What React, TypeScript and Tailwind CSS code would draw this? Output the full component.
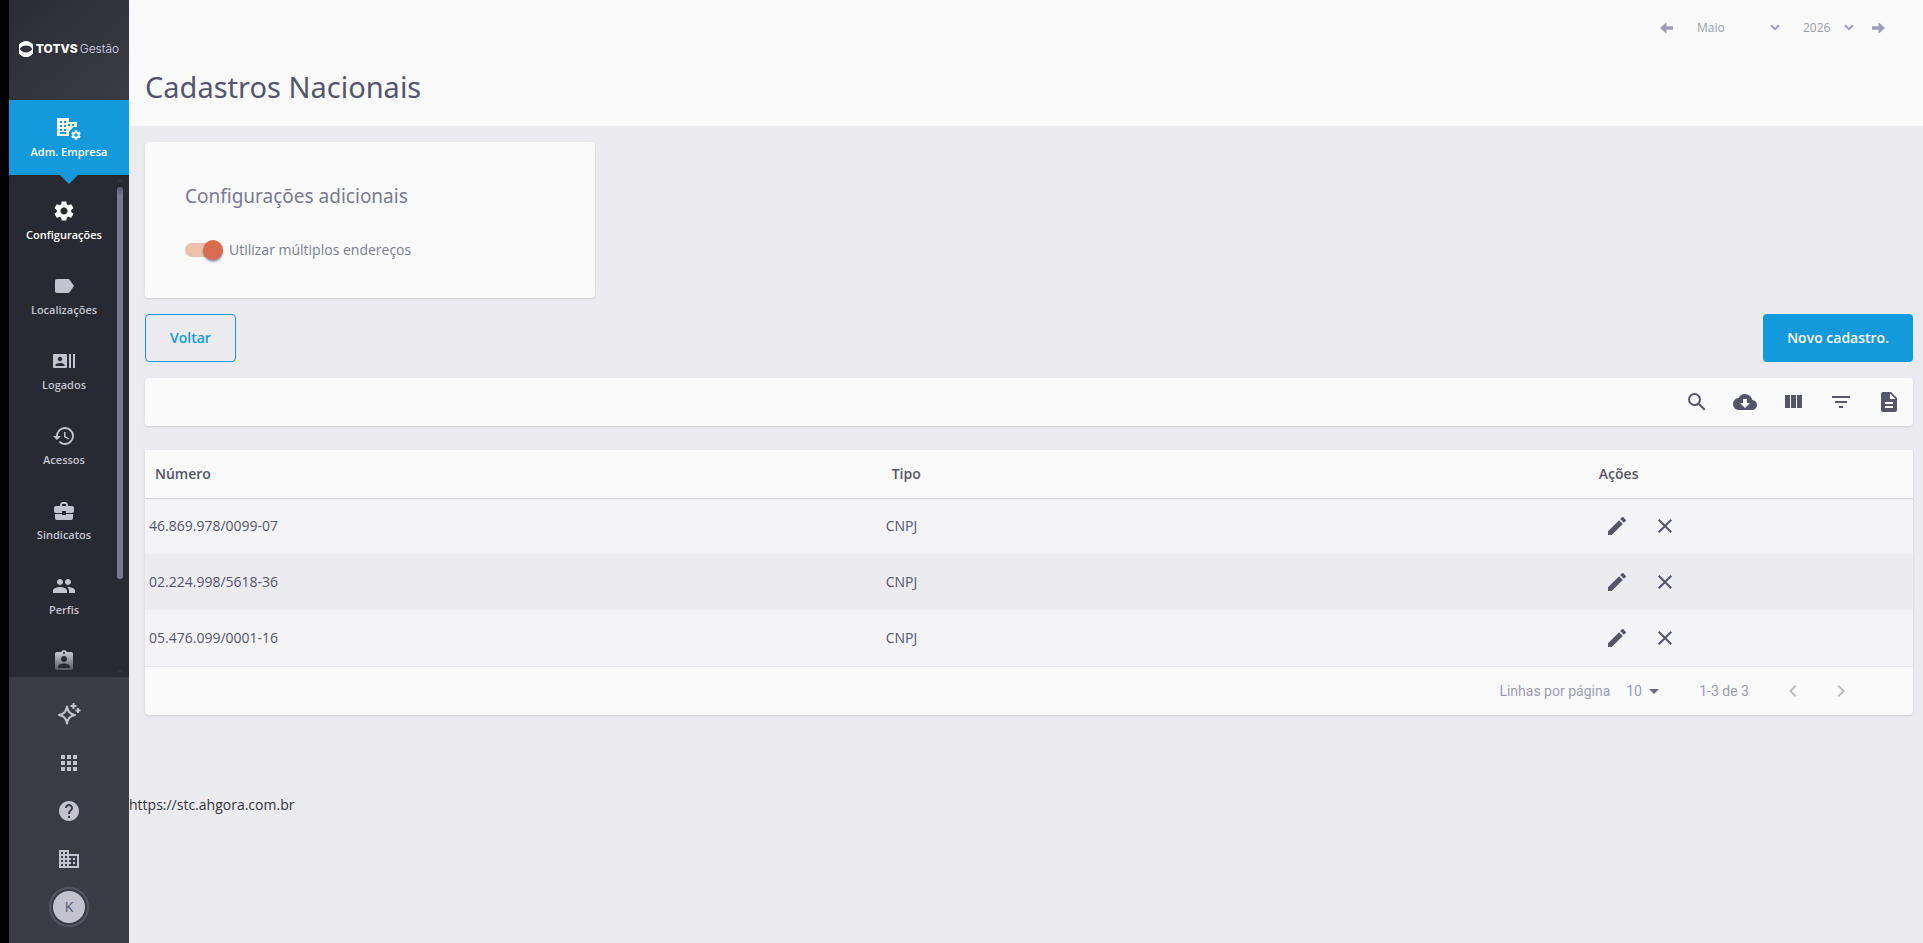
import React from 'react';
import {
  MdApps,
  MdArrowDropDown,
  MdAssignmentInd,
  MdBusiness,
  MdBusinessCenter,
  MdChevronLeft,
  MdChevronRight,
  MdClose,
  MdCloudDownload,
  MdDescription,
  MdEdit,
  MdFilterList,
  MdHelp,
  MdHistory,
  MdLabel,
  MdPeople,
  MdRecentActors,
  MdSearch,
  MdSettings,
} from 'react-icons/md';
import type { IconType } from 'react-icons';

interface MenuItem {
  label: string;
  icon: IconType;
  active?: boolean;
  iconOnly?: boolean;
}

const menuItems: MenuItem[] = [
  { label: 'Configurações', icon: MdSettings, active: true },
  { label: 'Localizações', icon: MdLabel },
  { label: 'Logados', icon: MdRecentActors },
  { label: 'Acessos', icon: MdHistory },
  { label: 'Sindicatos', icon: MdBusinessCenter },
  { label: 'Perfis', icon: MdPeople },
  { label: 'Usuários', icon: MdAssignmentInd, iconOnly: true },
];

const registrations = [
  { number: '46.869.978/0099-07', type: 'CNPJ' },
  { number: '02.224.998/5618-36', type: 'CNPJ' },
  { number: '05.476.099/0001-16', type: 'CNPJ' },
];

const months = ['Janeiro', 'Fevereiro', 'Março', 'Abril', 'Maio', 'Junho', 'Julho', 'Agosto', 'Setembro', 'Outubro', 'Novembro', 'Dezembro'];

const Logo: React.FC = () => (
  <div className="flex items-center justify-center h-[100px] pb-0.5 bg-linear-to-br from-[#2b2b34] to-[#3c3c46]">
    <svg width="14" height="16" viewBox="0 0 14 16" className="mr-[3px]" aria-hidden="true">
      <path d="M0 3.600C2 1.200 4.300 0 7 0s5 1.200 7 3.600v8.800C12 14.800 9.700 16 7 16s-5-1.200-7-3.600z" fill="#fff" />
      <path d="M.6 8C2.200 5.700 4.300 4.600 7 4.600s4.800 1.100 6.400 3.400c-1.600 2.300-3.700 3.400-6.400 3.400S2.200 10.300.6 8z" fill="#32323b" />
    </svg>
    <span className="font-['Inter'] text-[12px] font-extrabold text-white">TOTVS</span>
    <span className="ml-[2px] font-['Inter'] text-[12px] font-light text-[#dcd8ea]">Gestão</span>
  </div>
);

const CompanySettingsIcon: React.FC = () => (
  <svg width="24" height="22" viewBox="0 0 24 22" aria-hidden="true">
    <path
      fillRule="evenodd"
      d="M0 0h12v4h8v5h-3.500L12 13.500V18H0zM3 3v2h2V3zM7 3v2h2V3zM3 7v2h2V7zM7 7v2h2V7zM3 11v2h2v-2zM7 11v2h2v-2zM3 14v2h6v-2zM11 6v2h2V6zM15 6v2h2V6z"
      fill="#fff"
    />
    <g transform="translate(13 11) scale(.5)">
      <path
        d="M19.140 12.940c.04-.3.060-.61.060-.94 0-.32-.02-.64-.07-.94l2.030-1.580a.49.490 0 0 0 .12-.61l-1.920-3.320a.488.488 0 0 0-.59-.22l-2.390.96c-.5-.38-1.030-.7-1.620-.94l-.36-2.540a.484.484 0 0 0-.48-.41h-3.840c-.24 0-.43.170-.47.410l-.36 2.540c-.59.240-1.130.570-1.620.94l-2.390-.96c-.22-.08-.47 0-.59.220L2.740 8.870c-.12.210-.08.470.12.610l2.030 1.580c-.05.300-.09.630-.09.940s.02.640.070.940l-2.030 1.580a.49.490 0 0 0-.12.610l1.920 3.320c.12.220.370.290.590.220l2.390-.96c.5.380 1.030.7 1.620.94l.36 2.540c.05.240.240.410.480.410h3.840c.24 0 .44-.17.470-.41l.36-2.540c.59-.24 1.130-.56 1.620-.94l2.390.96c.22.080.470 0 .590-.22l1.920-3.320c.12-.22.070-.47-.12-.61l-2.010-1.580zM12 15.600c-1.980 0-3.600-1.620-3.600-3.600s1.620-3.600 3.600-3.600 3.600 1.620 3.600 3.600-1.620 3.600-3.600 3.600z"
        fill="#fff"
      />
    </g>
  </svg>
);

const SparkleIcon: React.FC = () => (
  <svg width="24" height="24" viewBox="0 0 24 24" fill="none" stroke="currentColor" aria-hidden="true">
    <path d="M10 4.500c.9 5.200 2.500 7.300 8 8.500-5.500 1.200-7.100 3.300-8 8.500-.9-5.200-2.500-7.300-8-8.500 5.500-1.200 7.100-3.300 8-8.500z" strokeWidth="2" strokeLinejoin="round" />
    <path d="M16.500 1v6M13.500 4h6M21 6v5M18.500 8.500h5" strokeWidth="2" />
  </svg>
);

const ColumnsIcon: React.FC = () => (
  <svg width="24" height="24" viewBox="0 0 24 24" fill="currentColor" aria-hidden="true">
    <path d="M10 18h5V5h-5v13zm-6 0h5V5H4v13zM16 5v13h5V5h-5z" />
  </svg>
);

const ArrowIcon: React.FC<{ className?: string }> = ({ className }) => (
  <svg width="13" height="10" viewBox="0 0 13 10" fill="currentColor" className={className} aria-hidden="true">
    <path d="M0 5l5.500-5h1v3.200H13v3.600H6.500V10h-1z" />
  </svg>
);

const ChevronIcon: React.FC = () => (
  <svg width="10" height="7" viewBox="0 0 10 7" fill="none" className="pointer-events-none absolute right-0 top-2" aria-hidden="true">
    <path d="M1 1.200l4 4 4-4" stroke="#a09db8" strokeWidth="2" />
  </svg>
);

const Sidebar: React.FC = () => (
  <aside className="sticky top-0 flex flex-col h-screen w-[129px] shrink-0 border-l-[9px] border-black bg-[#3b3b44] text-[#c3c2ce]">
    <Logo />
    <a href="#empresa" className="relative z-10 flex flex-col items-center h-[75px] pt-[18px] gap-1 bg-[#129add] text-white">
      <CompanySettingsIcon />
      <span className="text-[11px] leading-4 font-semibold">Adm. Empresa</span>
      <svg width="18" height="9" viewBox="0 0 18 9" className="absolute top-full" aria-hidden="true">
        <path d="M0 0h18L9 9z" fill="#129add" />
      </svg>
    </a>

    <div className="relative flex flex-1 min-h-0 overflow-hidden bg-[#292a31]">
      <nav className="flex-1 pt-6 pl-0.5">
        {menuItems.map(({ label, icon: Icon, active, iconOnly }) => (
          <a
            key={label}
            href="#menu"
            aria-label={label}
            className={`flex flex-col items-center gap-1 h-[75px] text-[11px] leading-4 font-semibold ${active ? 'text-white' : ''}`}
          >
            <Icon size={24} />
            {!iconOnly && <span>{label}</span>}
          </a>
        ))}
      </nav>
      {/* scrollbar */}
      <div className="flex flex-col items-center w-[6px] mr-[6px] py-[3px]">
        <svg width="6" height="4" viewBox="0 0 6 4" aria-hidden="true"><path d="M3 0l3 4H0z" fill="#4b4b56" /></svg>
        <div className="w-full flex-1 min-h-0 py-[5px]">
          <div className="w-full h-[82%] rounded-full bg-[#7b7992]"></div>
        </div>
        <svg width="6" height="4" viewBox="0 0 6 4" aria-hidden="true"><path d="M3 4l3-4H0z" fill="#4b4b56" /></svg>
      </div>
      <div className="pointer-events-none absolute inset-x-0 top-0 h-5 bg-linear-to-b from-[#292a31] to-transparent"></div>
      <div className="pointer-events-none absolute inset-x-0 bottom-0 h-6 bg-linear-to-t from-[#292a31] to-transparent"></div>
    </div>

    <div className="flex flex-col items-center py-3">
      <button aria-label="Assistente" className="flex items-center justify-center w-12 h-[50px]"><SparkleIcon /></button>
      <button aria-label="Aplicativos" className="flex items-center justify-center size-12"><MdApps size={24} /></button>
      <button aria-label="Ajuda" className="flex items-center justify-center size-12"><MdHelp size={24} /></button>
      <button aria-label="Empresas" className="flex items-center justify-center size-12"><MdBusiness size={24} /></button>
      <button aria-label="Perfil" className="flex items-center justify-center size-12">
        <span className="flex items-center justify-center size-10 rounded-full border-2 border-[#555566]">
          <span className="flex items-center justify-center size-8 rounded-full bg-[#c3c2ce] text-sm text-[#56566b]">K</span>
        </span>
      </button>
    </div>
  </aside>
);

const Header: React.FC = () => (
  <header className="h-[126px] bg-[#fafafa]">
    <div className="flex items-center justify-end h-14 pr-[38px] text-xs text-[#a09db8]">
      <button aria-label="Mês anterior"><ArrowIcon /></button>
      <div className="relative ml-6">
        <select aria-label="Mês" defaultValue="Maio" className="block appearance-none w-[83px] h-6 text-[#9b9fae]">
          {months.map((month) => <option key={month}>{month}</option>)}
        </select>
        <ChevronIcon />
      </div>
      <div className="relative ml-[23px]">
        <select aria-label="Ano" defaultValue="2026" className="block appearance-none w-[51px] h-6 text-[#9b9fae]">
          <option>2025</option>
          <option>2026</option>
        </select>
        <ChevronIcon />
      </div>
      <button aria-label="Próximo mês" className="ml-[18px]"><ArrowIcon className="rotate-180" /></button>
    </div>
    <h1 className="pl-4 font-['Noto_Sans'] text-[29px] leading-[62px] text-[#56566b]">Cadastros Nacionais</h1>
  </header>
);

const SettingsCard: React.FC = () => (
  <section className="w-[450px] h-[156px] px-10 pt-10 rounded bg-[#fafafa] shadow-sm">
    <h2 className="font-['Noto_Sans'] text-[19px] leading-7 text-[#7b7992]">Configurações adicionais</h2>
    <label className="flex items-center gap-2 mt-[30px] text-sm text-[#7c7d92]">
      <span className="relative flex items-center w-9 h-5">
        <input type="checkbox" defaultChecked className="peer appearance-none w-9 h-[14px] rounded-full bg-gray-300 checked:bg-[#f0c1a9]" />
        <span className="absolute left-0 size-5 rounded-full bg-white shadow-[0_2px_2px_rgba(60,60,90,0.5)] peer-checked:left-[18px] peer-checked:bg-[#d76c50]"></span>
      </span>
      Utilizar múltiplos endereços
    </label>
  </section>
);

const toolbarActions = [
  { label: 'Pesquisar', icon: <MdSearch size={24} /> },
  { label: 'Baixar', icon: <MdCloudDownload size={24} /> },
  { label: 'Colunas', icon: <ColumnsIcon /> },
  { label: 'Filtrar', icon: <MdFilterList size={24} /> },
  { label: 'Relatório', icon: <MdDescription size={24} /> },
];

const RegistrationTable: React.FC = () => (
  <div className="mt-6 rounded-b bg-[#fafafa] shadow-sm text-sm text-[#56566b]">
    <table className="w-full table-fixed border-collapse text-left">
      <thead>
        <tr className="relative h-12 shadow-[0_1px_1px_#d4d4da]">
          <th className="w-5/12 px-[10px] font-semibold">Número</th>
          <th className="w-2/5 px-[10px] font-semibold">Tipo</th>
          <th className="px-[10px] font-semibold">Ações</th>
        </tr>
      </thead>
      <tbody>
        {registrations.map((row) => (
          <tr key={row.number} className="h-14 odd:bg-[#f4f4f6] even:bg-[#ecebf0]">
            <td className="px-1">{row.number}</td>
            <td className="px-1">{row.type}</td>
            <td className="px-1">
              <div className="flex">
                <button aria-label="Editar" className="flex items-center justify-center size-12"><MdEdit size={24} /></button>
                <button aria-label="Excluir" className="flex items-center justify-center size-12"><MdClose size={24} /></button>
              </div>
            </td>
          </tr>
        ))}
      </tbody>
    </table>
    <div className="flex items-center justify-end h-[49px] pr-12 border-t border-[#e4e4ea] font-['Roboto'] text-[#9b9db2]">
      <label htmlFor="page-size">Linhas por página</label>
      <div className="relative ml-4">
        <select id="page-size" defaultValue="10" className="block appearance-none w-[41px] h-6">
          <option>10</option>
          <option>25</option>
          <option>50</option>
        </select>
        <MdArrowDropDown size={24} className="pointer-events-none absolute top-0 left-4 text-[#6c6a82]" />
      </div>
      <span className="ml-4 mr-5 pl-4">1-3 de 3</span>
      <button aria-label="Página anterior" className="flex items-center justify-center size-12 text-[#bcbcbc]"><MdChevronLeft size={24} /></button>
      <button aria-label="Próxima página" className="flex items-center justify-center size-12 text-[#bcbcbc]"><MdChevronRight size={24} /></button>
    </div>
  </div>
);

export default function App() {
  return (
    <div className="flex min-h-screen bg-[#ecebf0] font-['Open_Sans',sans-serif]">
      <Sidebar />
      <div className="flex-1 min-w-0">
        <Header />
        <main className="pt-4 pl-4 pr-[10px]">
          <SettingsCard />
          <div className="flex justify-between my-4 text-sm font-semibold">
            <button className="h-12 px-6 rounded-sm border border-[#129add] text-[#129add]">Voltar</button>
            <button className="h-12 px-6 rounded-sm bg-[#129add] text-white">Novo cadastro.</button>
          </div>
          <div className="flex justify-end h-12 rounded bg-[#fafafa] shadow-sm text-[#56566b]">
            {toolbarActions.map(({ label, icon }) => (
              <button key={label} aria-label={label} className="flex items-center justify-center size-12">{icon}</button>
            ))}
          </div>
          <RegistrationTable />
        </main>
        <footer className="mt-20 text-sm text-[#33333d]">https://stc.ahgora.com.br</footer>
      </div>
    </div>
  );
}
